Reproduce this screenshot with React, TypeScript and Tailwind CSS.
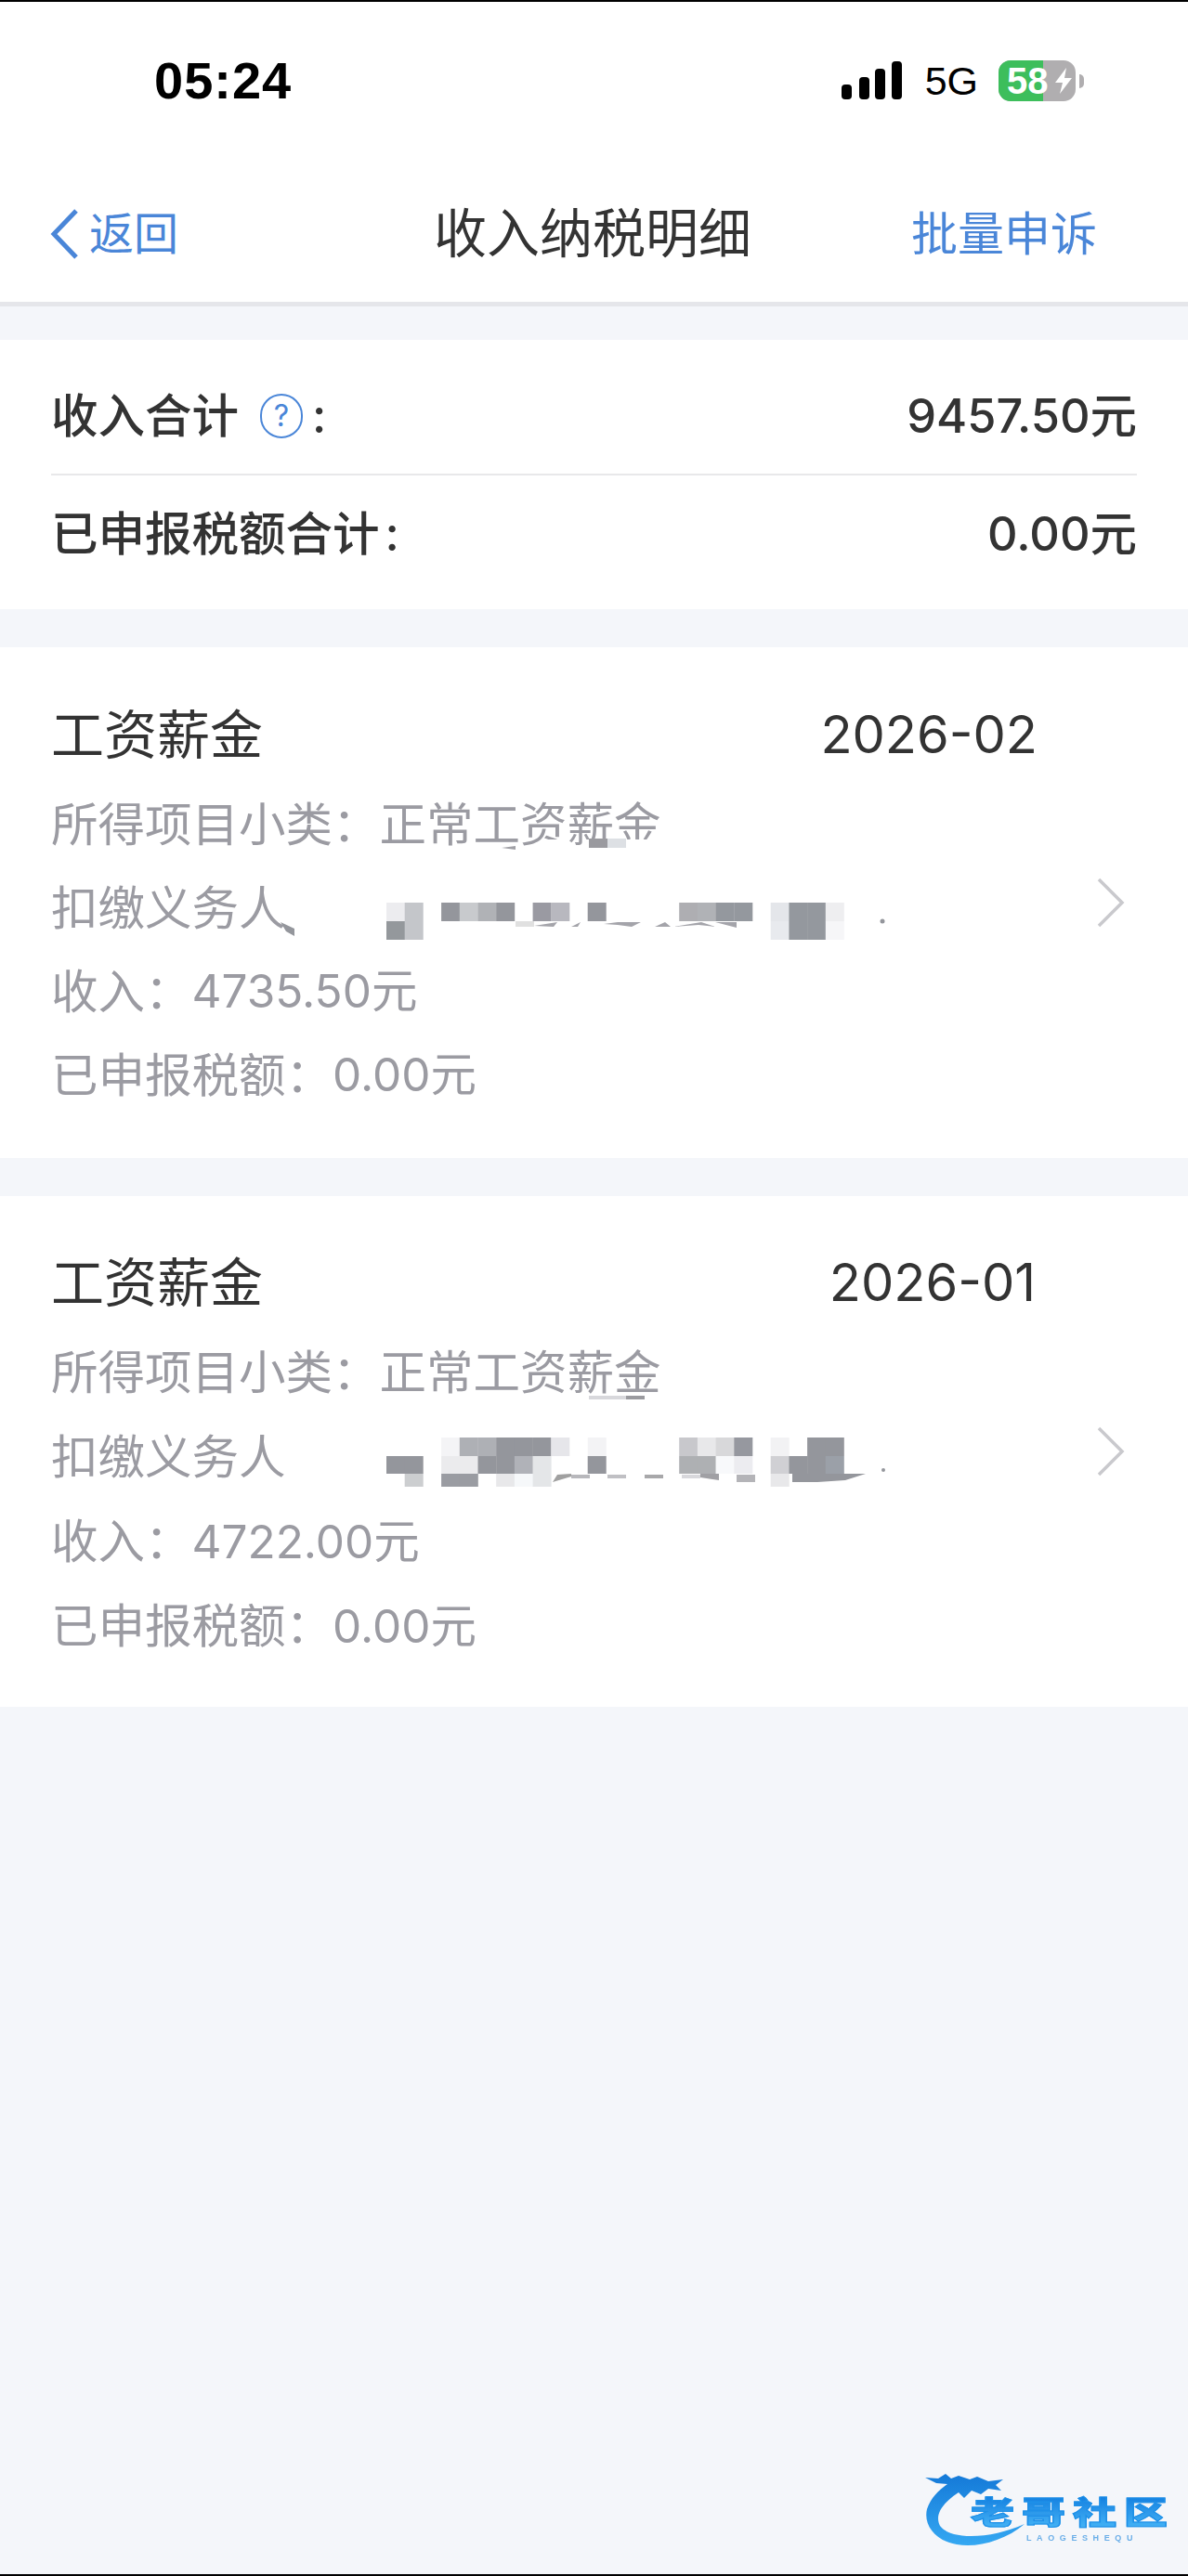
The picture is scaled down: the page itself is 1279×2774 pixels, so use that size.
import React from "react";

const FONT = "[font-family:Inter,'Noto_Sans_CJK_SC',sans-serif]";
const COL = (k: number) => 416 + 19.7 * k;

type Cell = [number, number, string, number?];

const card2Top: Cell[] = [
  [0, 1, "#ececef"], [1, 1, "#c4c6ca"], [3, 1, "#94969c"], [4, 1, "#c8cacd"], [5, 1, "#b0b2b6"], [6, 1, "#94969c"],
  [8, 1, "#9a9aa2"], [9, 1, "#b8b8bf"], [11, 1, "#94969c"], [16, 1, "#aeaeb2"], [17, 1, "#b0b2b6"],
  [18, 1, "#94989e"], [19, 1, "#94989e"], [21, 1, "#e4e6ea"], [22, 1, "#94989e"], [23, 1, "#94989e"], [24, 1, "#eeeef0"],
  [0, 2, "#94989c"], [1, 2, "#c4c6ca"], [21, 2, "#e8eaee"], [22, 2, "#94989e"], [23, 2, "#94989e"], [24, 2, "#f6f6f8"],
];

const card3Cells: Cell[] = [
  [3, 0, "#f4f4f6"], [4, 0, "#aeb0b5"], [5, 0, "#aeb0b5"], [6, 0, "#94969c"], [7, 0, "#94969c"], [8, 0, "#94969c"],
  [9, 0, "#e6e6ea"], [11, 0, "#f3f3f5"], [16, 0, "#c8c8cc"], [17, 0, "#e8e8ea"], [18, 0, "#d8d8da"], [19, 0, "#96989f"],
  [21, 0, "#f2f2f4"], [23, 0, "#94969c"], [24, 0, "#94969c"],
  [0, 1, "#94969c"], [1, 1, "#94969c"], [3, 1, "#ebebed"], [4, 1, "#ebebed"], [5, 1, "#94969c"], [6, 1, "#94969c"],
  [7, 1, "#b0b2b8"], [8, 1, "#e4e6e8"], [11, 1, "#94969c"], [16, 1, "#aeb0b3"], [17, 1, "#aeb0b3"], [18, 1, "#f8f9fb"],
  [19, 1, "#ececf0"], [21, 1, "#d0d0d4"], [22, 1, "#94969c"], [23, 1, "#94969c"], [24, 1, "#9ba0a8"],
  [1, 2, "#ccced0"], [3, 2, "#9a9ca2"], [4, 2, "#9a9ca2"], [6, 2, "#e8e8ea"], [7, 2, "#f6f8fa"], [8, 2, "#e4e6e8"],
  [21, 2, "#e8e8ea"],
];

function Mosaic2() {
  return (
    <svg className="absolute left-0 top-[203px] w-[1000px] h-[115px]" viewBox="0 900 1000 115">
      <rect x="590" y="904" width="20" height="10" fill="#fff" />
      <rect x="630" y="904" width="90" height="12" fill="#fff" />
      <path d="M540 913 L555 911 L555 915 Z" fill="#a0a0a6" />
      <rect x="634" y="903" width="20" height="10" fill="#9a9a9f" />
      <rect x="654" y="903" width="20" height="10" fill="#dde0e4" />
      {card2Top.map(([c, r, f], i) => (
        <rect key={i} x={COL(c)} y={r === 1 ? 972 : 992} width="20" height="20" fill={f} />
      ))}
      <path d="M302 993 L317 1000 L317 1008 L308 1003 Z" fill="#94969c" />
      <rect x="555" y="992" width="20" height="6" fill="#e0e0e0" />
      <path d="M575 997 L600 993 L596 998 Z M615 998 L625 993 L622 998 Z M650 995 L665 993 L690 993 L680 998 L665 996 Z M705 998 L716 993 L722 998 Z M725 998 L755 993 L770 998 L752 996 Z M770 993 L793 999 L793 993 Z" fill="#a4a4aa" />
      <circle cx="950" cy="992" r="2.5" fill="#94969c" />
    </svg>
  );
}

function Mosaic3() {
  return (
    <svg className="absolute left-0 top-[215px] w-[1000px] h-[320px]" viewBox="0 1503 1000 320">
      <rect x="634" y="1503" width="40" height="4" fill="#d8d8dc" />
      <rect x="674" y="1503" width="20" height="4" fill="#9a9a9f" />
      {card3Cells.map(([c, r, f], i) => (
        <rect key={i} x={COL(c)} y={[1548, 1568, 1587][r]} width="20" height={[20, 19, 14][r]} fill={f} />
      ))}
      <path d="M595 1596 L600 1588 L615 1587 L615 1590 Z" fill="#a0a0a0" />
      <rect x="615" y="1588" width="20" height="4" fill="#b8b8bc" />
      <rect x="654" y="1588" width="20" height="4" fill="#c0c0c4" />
      <rect x="694" y="1588" width="20" height="4" fill="#a8a8aa" />
      <rect x="734" y="1588" width="20" height="4" fill="#d8d8dc" />
      <path d="M754 1587 L774 1587 L774 1594 L754 1591 Z" fill="#a0a0a4" />
      <rect x="793" y="1588" width="20" height="8" fill="#b4b4b8" />
      <path d="M853 1587 L932 1587 L910 1594 L880 1596 L853 1596 Z" fill="#94969c" />
      <circle cx="951" cy="1583" r="2" fill="#94969c" />
    </svg>
  );
}

function Chevron() {
  return (
    <svg className="w-[30px] h-[56px] shrink-0" viewBox="0 0 30 56" fill="none">
      <path d="M2 3 L27 28 L2 53" stroke="#c9c9cd" strokeWidth="3.5" />
    </svg>
  );
}

function Row({ className, children }: { className: string; children: React.ReactNode }) {
  return <div className={`flex items-center text-[50.5px] leading-none text-[#9b9ba2] ${className}`}>{children}</div>;
}

function Amount({ children }: { children: React.ReactNode }) {
  return <span className="text-[49.5px]">{children}</span>;
}

function IncomeCard(props: {
  top: string;
  rowH: string;
  dateEnd: string;
  date: string;
  income: string;
  mosaic: React.ReactNode;
}) {
  const { top, rowH, dateEnd, date, income, mosaic } = props;
  return (
    <section className="relative mt-[41px] flex h-[550px] items-center bg-white pl-[55px] pr-[68px]">
      <div className={`flex-1 ${top}`}>
        <div className={`flex h-[60px] items-center justify-between text-[#333333] ${dateEnd}`}>
          <span className="text-[57px] leading-none">工资薪金</span>
          <span className="text-[56px] leading-none">{date}</span>
        </div>
        <div className="mt-[22px]">
          <Row className={rowH}>所得项目小类：正常工资薪金</Row>
          <Row className={rowH}>扣缴义务人</Row>
          <Row className={rowH}>收入：<Amount>{income}元</Amount></Row>
          <Row className={rowH}>已申报税额：<Amount>0.00元</Amount></Row>
        </div>
      </div>
      <Chevron />
      {mosaic}
    </section>
  );
}

function Logo() {
  return (
    <div className="absolute left-[960px] top-[2620px] w-[319px] h-[150px] blur-[0.6px]">
      <svg className="absolute left-0 top-0 w-[319px] h-[150px]" viewBox="0 0 319 150">
        <defs>
          <linearGradient id="sw" x1="0" y1="0" x2="0" y2="1">
            <stop offset="0" stopColor="#1479d8" />
            <stop offset="1" stopColor="#35a8f2" />
          </linearGradient>
        </defs>
        <path
          d="M36 46 L50 47 L58 42 L64 47 L72 44 L84 48 L92 45 L104 50 L120 48 L112 54 L118 60 L104 58 L96 64 L86 60 L78 68 L72 62 C54 74 46 86 52 98 C64 114 108 112 143 96 C122 114 92 122 70 118 C46 114 34 96 38 80 C42 68 50 60 60 53 L48 52 Z"
          fill="url(#sw)"
        />
      </svg>
      <div className="absolute left-[85px] top-[60px] flex w-[212px] justify-between bg-gradient-to-b from-[#1480e0] to-[#45b4f6] bg-clip-text text-[47px] leading-[48px] font-black text-transparent scale-y-[0.72] [-webkit-text-stroke:1.5px_#1e90e8]">
        <span>老</span>
        <span>哥</span>
        <span>社</span>
        <span>区</span>
      </div>
      <div className="absolute left-[145px] top-[106px] w-[130px] whitespace-nowrap text-[9px] leading-[10px] font-bold tracking-[5.6px] text-[#6aaee8] [font-family:'Liberation_Sans',sans-serif]">
        LAOGESHEQU
      </div>
    </div>
  );
}

export default function App() {
  return (
    <div className={`relative h-[2774px] w-[1279px] overflow-hidden border-t-2 border-b-2 border-black bg-[#f4f6fa] ${FONT}`}>
      <header className="border-b-[5px] border-[#e5e6ea] bg-white">
        <div className="flex h-[170px] items-center pl-[166px] pr-[112px]">
          <span className="text-[56px] leading-none font-bold tracking-[1px] text-black [font-family:'Liberation_Sans',sans-serif]">05:24</span>
          <div className="ml-auto flex items-center">
            <svg className="h-[42px] w-[66px]" viewBox="0 0 66 42" fill="#000">
              <rect x="0" y="25" width="11" height="16" rx="4" />
              <rect x="19" y="17" width="11" height="24" rx="4" />
              <rect x="36" y="8" width="11" height="33" rx="4" />
              <rect x="54" y="0" width="11" height="41" rx="4" />
            </svg>
            <span className="ml-[24px] text-[43px] leading-none text-black [font-family:'Liberation_Sans',sans-serif]">5G</span>
            <div className="relative ml-[22px] flex h-[44px] w-[83px] overflow-hidden rounded-[13px] bg-[#b0aeb0]">
              <div className="h-full w-[48px] bg-[#3dbe5c]" />
              <span className="absolute left-[9px] top-[2px] text-[40px] leading-[40px] font-bold text-white [font-family:'Liberation_Sans',sans-serif]">58</span>
              <svg className="absolute left-[60px] top-[8px] h-[28px] w-[20px]" viewBox="0 0 20 28" fill="#fff">
                <path d="M13 0 L1 16 L9 16 L6 28 L19 11 L11 11 Z" />
              </svg>
            </div>
            <div className="ml-[4px] h-[15px] w-[5px] rounded-r-full bg-[#b0aeb0]" />
          </div>
        </div>
        <div className="grid h-[153px] grid-cols-[414px_auto_1fr] items-center pl-[53px] pr-[98px] pt-[6px]">
          <div className="flex items-center text-[#4a86d8]">
            <svg className="h-[56px] w-[32px]" viewBox="0 0 32 56" fill="none">
              <path d="M29 3 L5 28 L29 53" stroke="currentColor" strokeWidth="5" />
            </svg>
            <span className="ml-[11px] text-[48px] leading-none">返回</span>
          </div>
          <h1 className="text-[57px] leading-none font-normal text-[#333333]">收入纳税明细</h1>
          <span className="justify-self-end text-[50px] leading-none text-[#4a86d8]">批量申诉</span>
        </div>
      </header>

      <section className="mt-[36px] bg-white px-[55px] pt-[55px] pb-[54px] text-[50.5px] leading-none font-medium text-[#333333]">
        <div className="flex h-[54px] items-center justify-between">
          <span className="flex items-center">
            收入合计
            <span className="ml-[23px] flex h-[48px] w-[46px] items-center justify-center rounded-full border-2 border-[#4a86d8] text-[32px] leading-none font-normal text-[#4a86d8]">?</span>
            <span className="ml-[10px]">:</span>
          </span>
          <span>9457.50元</span>
        </div>
        <div className="mt-[35px] mb-[36px] h-[2px] bg-[#e8e8ea]" />
        <div className="flex h-[54px] items-center justify-between">
          <span>
            已申报税额合计<span className="ml-[6px]">:</span>
          </span>
          <span>0.00元</span>
        </div>
      </section>

      <IncomeCard top="pt-[20px]" rowH="h-[90px]" dateEnd="pr-[64px]" date="2026-02" income="4735.50" mosaic={<Mosaic2 />} />
      <IncomeCard top="pt-[22px]" rowH="h-[91px]" dateEnd="pr-[66px]" date="2026-01" income="4722.00" mosaic={<Mosaic3 />} />
      <Logo />
    </div>
  );
}
